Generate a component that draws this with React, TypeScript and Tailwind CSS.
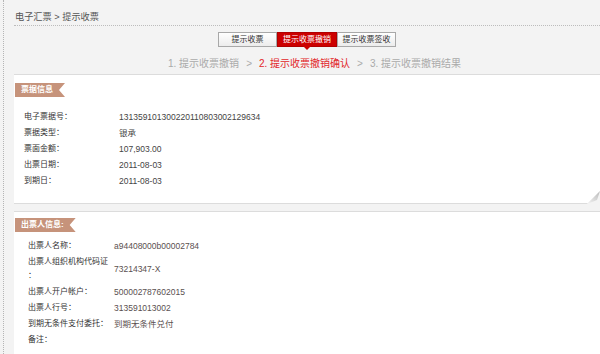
import React from 'react';

const billRows = [
  { label: '电子票据号：', value: '131359101300220110803002129634' },
  { label: '票据类型：', value: '银承' },
  { label: '票面金额：', value: '107,903.00' },
  { label: '出票日期：', value: '2011-08-03' },
  { label: '到期日：', value: '2011-08-03' },
];

const drawerRows = [
  { label: '出票人名称：', value: 'a94408000b00002784' },
  { label: '出票人组织机构代码证\n：', value: '73214347-X' },
  { label: '出票人开户帐户：', value: '500002787602015' },
  { label: '出票人行号：', value: '313591013002' },
  { label: '到期无条件支付委托：', value: '到期无条件兑付' },
  { label: '备注：', value: '' },
];

function Ribbon({ text }: { text: string }) {
  return (
    <div
      className="h-[14px] bg-[#c6937b] pl-[6px] pr-[12px] text-[8px] font-bold leading-[14px] text-white w-fit"
      style={{ clipPath: 'polygon(0 0, 100% 0, calc(100% - 6px) 50%, 100% 100%, 0 100%)' }}
    >
      {text}
    </div>
  );
}

export default function App() {
  const tabs = ['提示收票', '提示收票撤销', '提示收票签收'];
  const active = 1;

  return (
    <div
      className="h-[354px] w-[600px] overflow-hidden bg-[#f3f3f3]"
      style={{ fontFamily: '"Liberation Sans", "Noto Sans CJK SC", sans-serif' }}
    >
      <div className="ml-[3px] h-full border-l border-dotted border-[#b5b5b5] pl-[10px]">
        {/* breadcrumb */}
        <div className="h-[26px] border-b border-dotted border-[#bcbcbc] pl-[1px] pt-[11px] text-[9.2px] leading-[12px] text-[#555]">
          电子汇票 &gt; 提示收票
        </div>

        {/* tabs */}
        <div className="mt-[6px] flex justify-center">
          {tabs.map((t, i) =>
            i === active ? (
              <div
                key={t}
                className="relative h-[15px] w-[60px] border border-[#b00000] bg-[#cc0000] text-center text-[8px] leading-[13px] text-white"
              >
                {t}
                <span className="absolute left-1/2 top-[13px] -ml-[4px] h-0 w-0 border-x-[4px] border-t-[4px] border-x-transparent border-t-[#cc0000]" />
              </div>
            ) : (
              <div
                key={t}
                className="h-[15px] w-[59px] border border-[#a8a8a8] bg-gradient-to-b from-white to-[#ececec] text-center text-[8px] leading-[13px] text-[#333]"
              >
                {t}
              </div>
            )
          )}
        </div>

        {/* steps */}
        <div className="ml-[154px] mt-[10px] flex text-[10px] leading-[14px] text-[#aaa]">
          <span>1. 提示收票撤销</span>
          <span className="mx-[7px]">&gt;</span>
          <span className="text-[#e2262a]">2. 提示收票撤销确认</span>
          <span className="mx-[7px]">&gt;</span>
          <span>3. 提示收票撤销结果</span>
        </div>

        {/* bill info panel */}
        <div className="relative mt-[3px] border-y border-[#dcdcdc] bg-white pb-[14px] pt-[8px]">
          <div className="ml-[1px]">
            <Ribbon text="票据信息" />
          </div>
          <div className="mt-[12px] pl-[10px]">
            {billRows.map((r) => (
              <div key={r.label} className="flex h-[16px] items-center text-[8px]">
                <div className="w-[95px] text-[#333]">{r.label}</div>
                <div className="text-[8.5px] text-[#444]">{r.value}</div>
              </div>
            ))}
          </div>
          <svg className="absolute -bottom-[1px] right-0" width="13" height="14" viewBox="0 0 13 14">
            <defs>
              <linearGradient id="curl" x1="0" y1="1" x2="1" y2="0">
                <stop offset="0" stopColor="#f4f4f4" />
                <stop offset="1" stopColor="#b9b9b9" />
              </linearGradient>
            </defs>
            <polygon points="0,14 13,1 13,14" fill="#f3f3f3" />
            <polygon points="0,14 13,1 10,10" fill="url(#curl)" />
          </svg>
        </div>

        {/* drawer info panel */}
        <div className="mt-[7px] h-[200px] border-t border-[#dcdcdc] bg-white pt-[6px]">
          <div className="ml-[1px]">
            <Ribbon text="出票人信息:" />
          </div>
          <div className="mt-[6px] pl-[14px]">
            {drawerRows.map((r) => (
              <div key={r.label} className="flex min-h-[16px] items-center py-[1px] text-[8px]">
                <div className="w-[86px] whitespace-pre-line leading-[14px] text-[#333]">{r.label}</div>
                <div className="text-[8.5px] text-[#5a5050]">{r.value}</div>
              </div>
            ))}
          </div>
        </div>
      </div>
    </div>
  );
}
